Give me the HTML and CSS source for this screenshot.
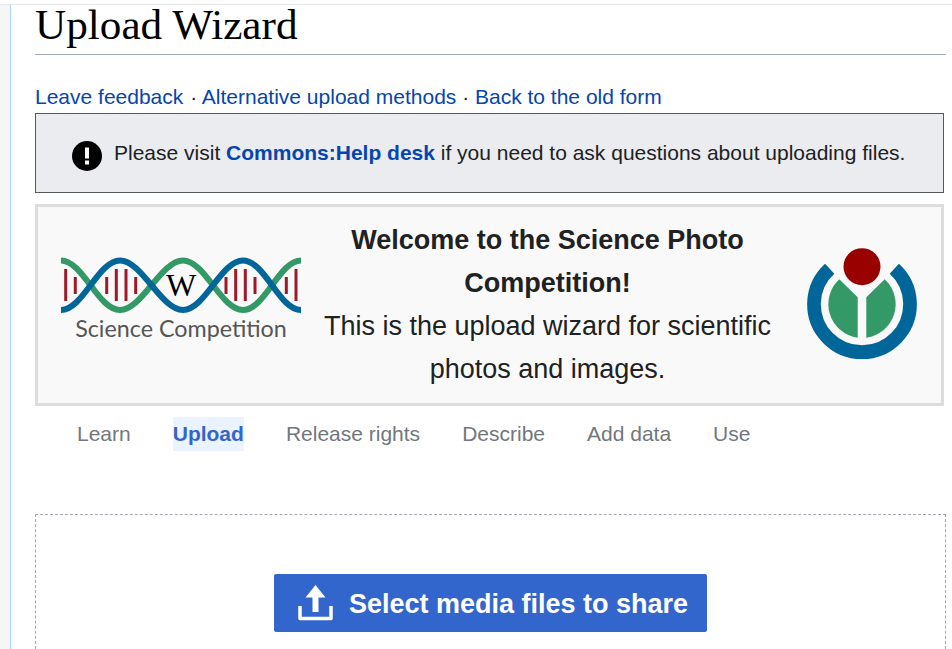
FILE: index.html
```html
<!DOCTYPE html>
<html lang="en">
<head>
<meta charset="utf-8">
<title>Upload Wizard</title>
<link rel="stylesheet" href="styles.css">
</head>
<body>
<div class="page">
  <div class="sidebar"></div>
  <main class="content">
    <h1 class="title">Upload Wizard</h1>
    <p class="links"><a href="#">Leave feedback</a><span class="sep-first"> · </span><a href="#">Alternative upload methods</a> · <a href="#">Back to the old form</a></p>
    <div class="notice">
      <svg class="notice-icon" width="30" height="30" viewBox="0 0 30 30"><circle cx="15" cy="15" r="15" fill="#000"/><rect x="13" y="6.500" width="4" height="11" fill="#fff"/><rect x="13" y="19.500" width="4" height="4" fill="#fff"/></svg>
      <span class="notice-text">Please visit <a href="#"><b>Commons:Help desk</b></a> if you need to ask questions about uploading files.</span>
    </div>
    <section class="welcome">
      <svg class="dna" width="240" height="90" viewBox="0 0 240 90">
        <g fill="#9e1a28">
          <rect x="3.200" y="12" width="3" height="32"/><rect x="12.800" y="20" width="3" height="17"/>
          <rect x="44.200" y="20" width="3" height="17"/><rect x="53.800" y="12" width="3" height="32"/><rect x="63.500" y="12" width="3" height="32"/><rect x="73.200" y="20" width="3" height="17"/>
          <rect x="163.500" y="20" width="3" height="17"/><rect x="173.200" y="12" width="3" height="32"/><rect x="182.800" y="12" width="3" height="32"/><rect x="192.500" y="20" width="3" height="17"/>
          <rect x="223.800" y="20" width="3" height="17"/><rect x="233.500" y="12" width="3" height="32"/>
        </g>
        <path class="strand-green" d="M0 3.500C22 3.500 37 53 59 53C81 53 100 3.500 122 3.500C144 3.500 160 53 182 53C204 53 218 3.500 240 3.500"/>
        <path class="strand-blue" d="M0 53C22 53 37 3.500 59 3.500C81 3.500 100 53 122 53C144 53 160 3.500 182 3.500C204 3.500 218 53 240 53"/>
        <text class="dna-w" x="120" y="39" text-anchor="middle">W</text>
        <text class="dna-label" x="120" y="80" text-anchor="middle">Science Competition</text>
      </svg>
      <div class="welcome-text">
        <strong>Welcome to the Science Photo Competition!</strong><br>
        This is the upload wizard for scientific photos and images.
      </div>
      <svg class="wmf" width="110" height="112" viewBox="0 0 110 112">
        <circle cx="55" cy="18.700" r="18.500" fill="#990000"/>
        <path d="M22.700 20.700A48 48 0 1 0 87.300 20.700" fill="none" stroke="#006699" stroke-width="13.700"/>
        <path fill="#339966" d="M32.300 31.300L50.700 49.300V89.700A33.800 33.800 0 0 1 32.300 31.300Z"/>
        <path fill="#339966" d="M77.700 31.300L59.300 49.300V89.700A33.800 33.800 0 0 0 77.700 31.300Z"/>
      </svg>
    </section>
    <nav class="steps">
      <span class="step">Learn</span>
      <span class="step step-active">Upload</span>
      <span class="step">Release rights</span>
      <span class="step">Describe</span>
      <span class="step">Add data</span>
      <span class="step">Use</span>
    </nav>
    <section class="dropzone">
      <button class="select-btn" type="button">
        <svg width="36" height="36" viewBox="0 0 36 36"><path fill="#fff" d="M17.500 0L27.500 12.500H20.500V27H14.500V12.500H7.500Z"/><path fill="none" stroke="#fff" stroke-width="3.500" stroke-linejoin="round" d="M2 21V33.500H33V21"/></svg>
        <span class="select-label">Select media files to share</span>
      </button>
    </section>
  </main>
</div>
</body>
</html>
```
FILE: styles.css
```css
html, body { margin: 0; padding: 0; background: #fff; }
body { height: 649px; overflow: hidden; font-family: "Liberation Sans", Arial, sans-serif; color: #202122; }
a { color: #0645ad; text-decoration: none; }
.page { display: flex; height: 644px; margin-top: 4px; border-top: 1px solid #e4e6e8; }
.sidebar { width: 10px; flex: none; background: #f6f6f6; border-right: 1px solid #a7d7f9; }
.content { flex: 1; min-width: 0; padding: 0 6px 0 24px; }
.title { margin: 0; height: 49px; border-bottom: 1px solid #a2a9b1; font: 400 43.200px/39px "Liberation Serif", serif; color: #000; }
.links { margin: 0; padding-top: 29px; height: 29px; font-size: 21px; line-height: 25px; color: #202122; }
.sep-first { margin-left: 1px; }
.notice { display: flex; align-items: center; gap: 12px; box-sizing: border-box; height: 80px; margin-right: 2px; padding: 5px 0 0 36px; background: #eaecf0; border: 1px solid #54595d; font-size: 21px; }
.notice-icon { flex: none; }
.notice-text { margin-bottom: 6px; }
.welcome { display: grid; grid-template-columns: 240px 471px 110px; align-items: center; column-gap: 0; box-sizing: border-box; height: 202px; margin: 11px 2px 0 0; padding: 0 0 0 23px; background: #f9f9f9; border: 3px solid #dddddd; }
.welcome-text { margin: 0 24px 0 11px; width: 471px; font-size: 27px; line-height: 43px; text-align: center; }
.dna { display: block; margin-bottom: 6px; }
.strand-green { fill: none; stroke: #339966; stroke-width: 6; }
.strand-blue { fill: none; stroke: #006699; stroke-width: 6; }
.dna-w { font: 400 32px "Liberation Serif", serif; fill: #000; }
.dna-label { font: 400 23.300px Lato, sans-serif; fill: #555; }
.wmf { display: block; margin: 0 0 2px 35px; }
.steps { display: flex; gap: 42px; margin-top: 11px; padding-left: 42px; font-size: 21px; line-height: 34px; color: #72777d; }
.step-active { color: #3366cc; background: #eaf3ff; font-weight: 700; }
.dropzone { display: flex; justify-content: center; align-items: flex-start; box-sizing: border-box; height: 135px; margin-top: 63px; padding-top: 59px; border: 1px dashed #a2a9b1; border-bottom: 0; }
.select-btn { display: flex; align-items: center; gap: 15px; height: 58px; padding: 0 19px 0 24px; border: 0; border-radius: 2px; background: #3366cc; color: #fff; font: 700 27px "Liberation Sans", sans-serif; }
.select-label { margin-top: 2px; }
```
